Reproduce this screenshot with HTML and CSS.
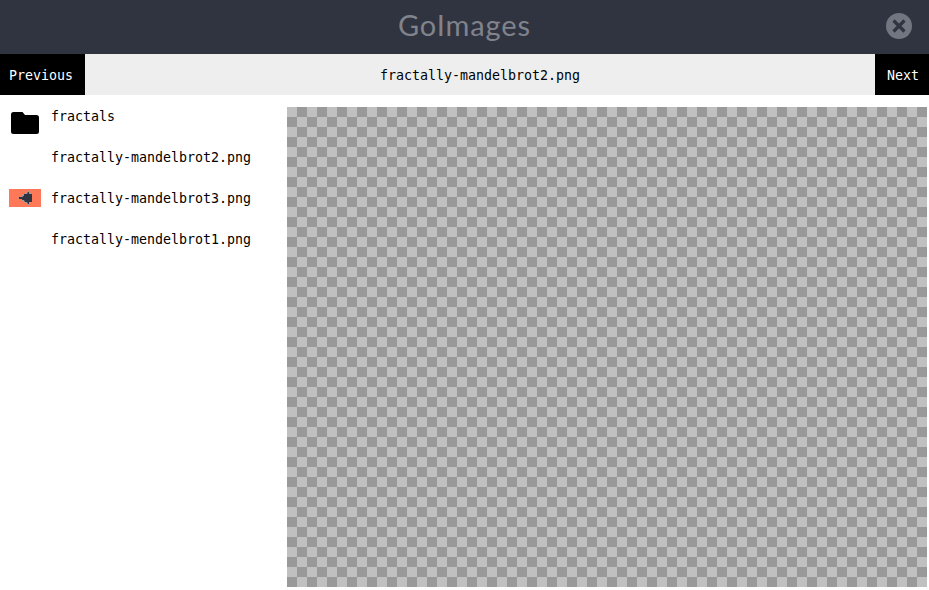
FILE: index.html
```html
<!DOCTYPE html>
<html lang="en">
<head>
<meta charset="utf-8">
<title>GoImages</title>
<link rel="stylesheet" href="styles.css">
</head>
<body>
<header class="header">
  <h1 class="title">GoImages</h1>
  <svg class="close" viewBox="0 0 26 26"><circle cx="13" cy="13" r="13"/><path d="M7.5 7.5 18.5 18.5M18.5 7.5 7.500 18.5"/></svg>
</header>
<nav class="toolbar">
  <div class="button previous">Previous</div>
  <div class="current"><span>fractally-mandelbrot2.png</span></div>
  <div class="button next">Next</div>
</nav>
<main class="content">
  <ul class="files">
    <li class="file"><span class="thumb"><svg class="folder" viewBox="0 0 28 22"><path d="M2.500 0H11.500L14 3H25.500Q28 3 28 5.500V19.500Q28 22 25.500 22H2.500Q0 22 0 19.500V2.500Q0 0 2.500 0Z"/></svg></span><span>fractals</span></li>
    <li class="file"><span class="thumb"></span><span>fractally-mandelbrot2.png</span></li>
    <li class="file"><span class="thumb thumb-image"><svg class="preview" viewBox="0 0 32 18"><path class="glow" d="M9 9 10 8H12L13 6H15L16 4H18L19 2H20L21 4H23V13H21L20 16H19L18 14H16L15 12H13L12 10H10Z"/><path class="set" d="M10 8H14V7H15V5H18L19 3H20V5H23V13H20V15H19L18 13H16L15 11H13V10H10Z"/></svg></span><span>fractally-mandelbrot3.png</span></li>
    <li class="file"><span class="thumb"></span><span>fractally-mendelbrot1.png</span></li>
  </ul>
  <div class="canvas"></div>
</main>
</body>
</html>
```
FILE: styles.css
```css
* { box-sizing: border-box; }
body {
  margin: 0;
  height: 590px;
  overflow: hidden;
  background: #fff;
  color: #000;
  font: 13.29px/20px "DejaVu Sans Mono", monospace;
}
.header {
  display: grid;
  grid-template-columns: 43px 1fr 43px;
  align-items: center;
  height: 54px;
  background: #303440;
}
.title {
  grid-column: 2;
  margin: -4px 0 0;
  color: #80838b;
  font: 400 29px/50px Lato, sans-serif;
  letter-spacing: 0.9px;
  text-align: center;
}
.close { width: 26px; height: 26px; margin-top: -2px; }
.close circle { fill: #727681; }
.close path { stroke: #303440; stroke-width: 3.2; fill: none; }
.toolbar { display: flex; height: 41px; line-height: 44px; }
.button { background: #000; color: #fff; }
.previous { width: 85px; padding-left: 9px; }
.current { flex: 1; background: #eee; text-align: center; }
.next { width: 54px; padding-left: 12px; }
.button, .current { height: 41px; }
.content { display: flex; padding-top: 12px; }
.files { width: 287px; margin: 0; padding: 0; list-style: none; }
.file { display: flex; height: 41px; padding-left: 9px; }
.thumb {
  display: flex;
  justify-content: center;
  align-items: center;
  width: 32px;
  height: 32px;
  margin-right: 10px;
}
.thumb-image { height: 18px; }
.folder { width: 28px; height: 22px; }
.preview { width: 32px; height: 18px; background: #ff7858; }
.glow { fill: #91a0a8; }
.set { fill: #303440; }
.canvas {
  width: 640px;
  height: 480px;
  background: repeating-conic-gradient(#999 0 25%, #c0c0c0 0 50%) 0 0 / 20px 20px;
}
```
